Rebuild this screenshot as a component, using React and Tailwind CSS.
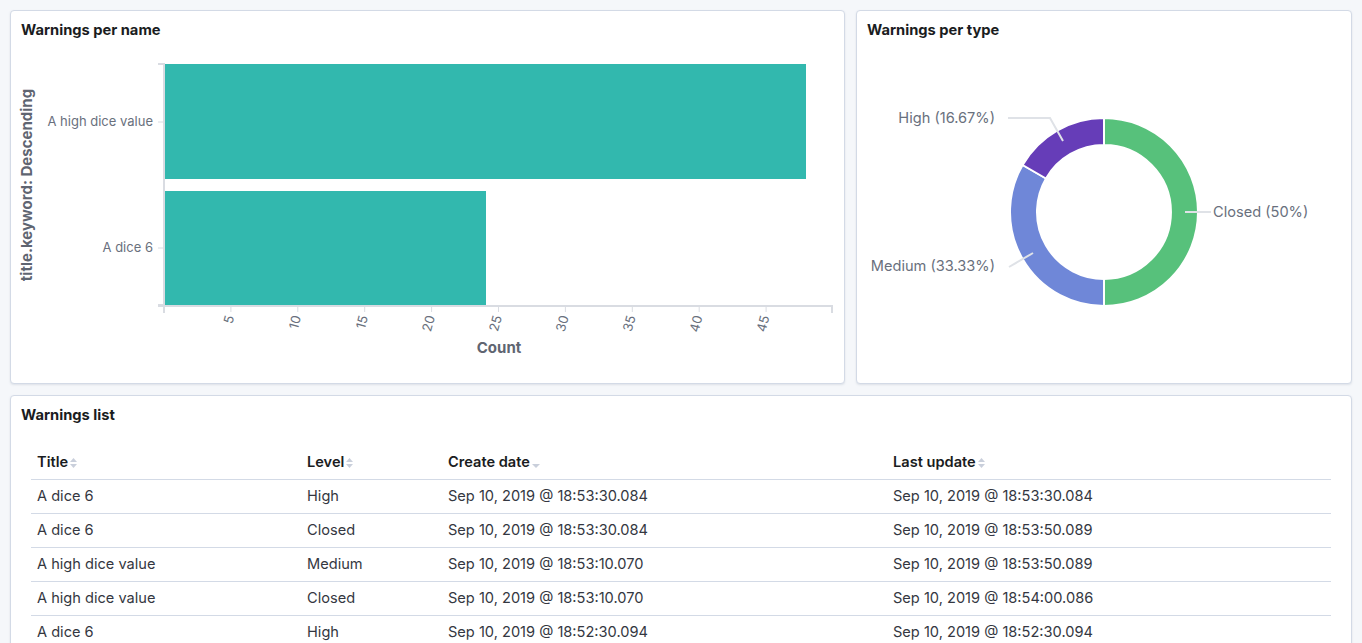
import React from "react";

const rows = [
  ["A dice 6", "High", "Sep 10, 2019 @ 18:53:30.084", "Sep 10, 2019 @ 18:53:30.084"],
  ["A dice 6", "Closed", "Sep 10, 2019 @ 18:53:30.084", "Sep 10, 2019 @ 18:53:50.089"],
  ["A high dice value", "Medium", "Sep 10, 2019 @ 18:53:10.070", "Sep 10, 2019 @ 18:53:50.089"],
  ["A high dice value", "Closed", "Sep 10, 2019 @ 18:53:10.070", "Sep 10, 2019 @ 18:54:00.086"],
  ["A dice 6", "High", "Sep 10, 2019 @ 18:52:30.094", "Sep 10, 2019 @ 18:52:30.094"],
];

const SortBoth = () => (
  <svg width="9" height="12" viewBox="0 0 9 12" className="ml-[1px]">
    <path d="M4.5 1 L8 5 L1 5 Z" fill="#c9cfdb" />
    <path d="M4.5 11 L8 7 L1 7 Z" fill="#c9cfdb" />
  </svg>
);

const SortDown = () => (
  <svg width="10" height="12" viewBox="0 0 10 12" className="ml-[1px]">
    <path d="M1 7 L9 7 L5 11 Z" fill="#c9cfdb" />
  </svg>
);

const Panel = ({ className = "", children }) => (
  <div
    className={`bg-white border border-[#d3dae6] rounded-[4px] shadow-[0_1px_2px_rgba(152,162,179,0.25)] ${className}`}
  >
    {children}
  </div>
);

const BarChart = () => {
  const unit = 13.38;
  const ticks = [5, 10, 15, 20, 25, 30, 35, 40, 45];
  return (
    <svg width="833" height="340" className="block">
      <g transform="translate(-11,-40)" fontFamily="Inter, 'Noto Sans', sans-serif">
        <rect x="165" y="64" width="641" height="115" fill="#32b8ae" />
        <rect x="165" y="191" width="321" height="114" fill="#32b8ae" />
        <line x1="164" y1="63" x2="164" y2="307" stroke="#d9dce2" strokeWidth="2" />
        {[64, 122, 248, 305].map((y) => (
          <line key={y} x1="158" y1={y} x2="164" y2={y} stroke="#d9dce2" strokeWidth={y === 64 || y === 305 ? 2 : 1} />
        ))}
        <line x1="158" y1="306" x2="833" y2="306" stroke="#d9dce2" strokeWidth="2" />
        <line x1="164" y1="306" x2="164" y2="313" stroke="#d9dce2" strokeWidth="2" />
        <line x1="832" y1="306" x2="832" y2="313" stroke="#d9dce2" strokeWidth="2" />
        {ticks.map((t) => {
          const x = 164 + t * unit;
          return (
            <g key={t}>
              <line x1={x} y1="306" x2={x} y2="312" stroke="#d9dce2" strokeWidth="1" />
              <text
                x={x}
                y="316"
                fontSize="13"
                fill="#69707d"
                textAnchor="end"
                dominantBaseline="middle"
                transform={`rotate(-75 ${x} 316)`}
              >
                {t}
              </text>
            </g>
          );
        })}
        <text x="153" y="122" fontSize="13" fill="#69707d" textAnchor="end" dominantBaseline="middle">
          A high dice value
        </text>
        <text x="153" y="248" fontSize="13" fill="#69707d" textAnchor="end" dominantBaseline="middle">
          A dice 6
        </text>
        <text
          x="28"
          y="185"
          fontSize="15"
          fontWeight="700"
          fill="#5f6571"
          textAnchor="middle"
          dominantBaseline="middle"
          transform="rotate(-90 28 185)"
        >
          title.keyword: Descending
        </text>
        <text x="499" y="349" fontSize="15" fontWeight="700" fill="#5f6571" textAnchor="middle" dominantBaseline="middle">
          Count
        </text>
      </g>
    </svg>
  );
};

const arc = (cx, cy, r0, r1, a0, a1) => {
  const rad = (a) => (a * Math.PI) / 180;
  const p = (r, a) => [cx + r * Math.sin(rad(a)), cy - r * Math.cos(rad(a))];
  const large = a1 - a0 > 180 ? 1 : 0;
  const [x0, y0] = p(r1, a0);
  const [x1, y1] = p(r1, a1);
  const [x2, y2] = p(r0, a1);
  const [x3, y3] = p(r0, a0);
  return `M${x0} ${y0} A${r1} ${r1} 0 ${large} 1 ${x1} ${y1} L${x2} ${y2} A${r0} ${r0} 0 ${large} 0 ${x3} ${y3} Z`;
};

const Donut = () => {
  const cx = 1104;
  const cy = 212;
  const slices = [
    { a0: 0, a1: 180, color: "#57c17b" },
    { a0: 180, a1: 300, color: "#6f87d8" },
    { a0: 300, a1: 360, color: "#663db8" },
  ];
  return (
    <svg width="494" height="340" className="block">
      <g transform="translate(-857,-40)" fontFamily="Inter, 'Noto Sans', sans-serif">
        {slices.map((s) => (
          <path key={s.a0} d={arc(cx, cy, 67, 94, s.a0, s.a1)} fill={s.color} stroke="#fff" strokeWidth="2" />
        ))}
        <polyline points="1008,118 1050,118 1063,141" fill="none" stroke="#dfe2e7" strokeWidth="2" />
        <polyline points="1185,212 1211,212" fill="none" stroke="#dfe2e7" strokeWidth="2" />
        <polyline points="1009,267 1033,253" fill="none" stroke="#dfe2e7" strokeWidth="2" />
        <text x="995" y="119" fontSize="14.6" fill="#69707d" textAnchor="end" dominantBaseline="middle">
          High (16.67%)
        </text>
        <text x="1213" y="213" fontSize="14.6" fill="#69707d" dominantBaseline="middle">
          Closed (50%)
        </text>
        <text x="995" y="267" fontSize="14.6" fill="#69707d" textAnchor="end" dominantBaseline="middle">
          Medium (33.33%)
        </text>
      </g>
    </svg>
  );
};

export default function App() {
  return (
    <div className="w-[1362px] h-[643px] overflow-hidden bg-[#f5f7fa] p-[10px] flex flex-col gap-[11px] font-['Inter',sans-serif]">
      <div className="flex gap-[11px] h-[374px] shrink-0">
        <Panel className="w-[835px] flex flex-col">
          <div className="px-[10px] pt-[9px] h-[29px] text-[14.7px] leading-[20px] font-bold text-[#1a1c21]">
            Warnings per name
          </div>
          <BarChart />
        </Panel>
        <Panel className="flex-1 flex flex-col">
          <div className="px-[10px] pt-[9px] h-[29px] text-[14.7px] leading-[20px] font-bold text-[#1a1c21]">
            Warnings per type
          </div>
          <Donut />
        </Panel>
      </div>
      <Panel className="flex-1 min-h-[300px]">
        <div className="px-[10px] pt-[9px] text-[14.7px] leading-[20px] font-bold text-[#1a1c21]">
          Warnings list
        </div>
        <div className="px-[20px] pt-[20px]">
          <table className="w-full border-collapse text-[14.6px] text-[#343741] table-fixed">
            <colgroup>
              <col className="w-[270px]" />
              <col className="w-[141px]" />
              <col className="w-[445px]" />
              <col />
            </colgroup>
            <thead>
              <tr className="h-[34px] border-b border-[#d3dae6]">
                <th className="text-left font-semibold px-[6px] pt-[2px] text-[#1a1c21]">
                  <span className="inline-flex items-center">Title<SortBoth /></span>
                </th>
                <th className="text-left font-semibold px-[6px] pt-[2px] text-[#1a1c21]">
                  <span className="inline-flex items-center">Level<SortBoth /></span>
                </th>
                <th className="text-left font-semibold px-[6px] pt-[2px] text-[#1a1c21]">
                  <span className="inline-flex items-center">Create date<SortDown /></span>
                </th>
                <th className="text-left font-semibold px-[6px] pt-[2px] text-[#1a1c21]">
                  <span className="inline-flex items-center">Last update<SortBoth /></span>
                </th>
              </tr>
            </thead>
            <tbody>
              {rows.map((r, i) => (
                <tr key={i} className="h-[34px] border-b border-[#d3dae6]">
                  {r.map((c, j) => (
                    <td key={j} className="px-[6px] pt-[2px]">
                      {c}
                    </td>
                  ))}
                </tr>
              ))}
            </tbody>
          </table>
        </div>
      </Panel>
    </div>
  );
}
